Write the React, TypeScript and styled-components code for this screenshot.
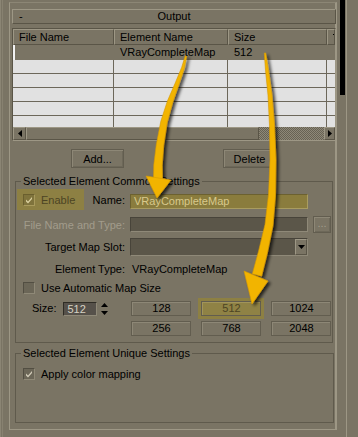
import React from 'react';
import styled, { createGlobalStyle } from 'styled-components';

const C = {
  bg: '#7a7464',
  light: '#9d9785',
  dark: '#5a5547',
  line: '#6c675a',
  row: '#e1e1e1',
  field: '#5b5649',
  hi: '#8d8043',
  hiText: '#d8c98c',
  hiInk: '#4c4423',
  arrow: '#f2b400',
};

const GlobalStyle = createGlobalStyle`
  html, body {
    margin: 0;
    background: ${C.bg};
    overflow: hidden;
  }
  body {
    font-family: 'Liberation Sans', Arial, sans-serif;
    font-size: 11px;
    color: #000;
  }
`;

const Screen = styled.div`
  position: relative;
  display: flex;
  width: 358px;
  height: 437px;
  background: ${C.bg};
`;

const LeftEdge = styled.div`
  width: 9px;
  flex: none;
  background: linear-gradient(to right, #8b8574 0 1px, ${C.bg} 1px 2px, #878170 2px 3px, ${C.bg} 3px);
`;

const Panel = styled.div`
  width: 328px;
  height: 428px;
  margin-top: 2px;
  flex: none;
  box-sizing: border-box;
  border-top: 1px solid #8c8675;
  border-left: 1px solid ${C.light};
  border-right: 2px solid ${C.light};
  border-bottom: 1px solid ${C.light};
  padding: 6px 0 0 2px;
  display: flex;
  flex-direction: column;
`;

const RightStrip = styled.div`
  flex: 1;
  display: flex;
  background: linear-gradient(to right, ${C.bg} 0 2px, transparent 2px);
`;

const ThumbTrack = styled.div`
  width: 5px;
  margin-left: 3px;
  height: 95px;
  background: #000;
`;

const TrackLine = styled.div`
  width: 1px;
  margin-left: 1px;
  background: ${C.light};
`;

const RolloutHeader = styled.div`
  position: relative;
  height: 15px;
  width: 324px;
  box-sizing: border-box;
  border-top: 1px solid ${C.light};
  border-left: 1px solid ${C.light};
  border-right: 1px solid ${C.dark};
  border-bottom: 1px solid ${C.dark};
  display: flex;
  align-items: center;
  justify-content: center;
  line-height: 13px;
`;

const Collapse = styled.span`
  position: absolute;
  left: 6px;
  top: 0;
`;

const Table = styled.div`
  margin-top: 4px;
  width: 324px;
  box-sizing: border-box;
  border-top: 1px solid ${C.dark};
  border-left: 1px solid ${C.dark};
  border-right: 1px solid ${C.light};
  border-bottom: 1px solid ${C.light};
  display: flex;
  flex-direction: column;
`;

const Cols = '101px 114px 99px 1fr';

const HeadRow = styled.div`
  display: grid;
  grid-template-columns: ${Cols};
  height: 16px;
`;

const HeadCell = styled.div`
  box-sizing: border-box;
  border-top: 1px solid ${C.light};
  border-left: 1px solid ${C.light};
  border-right: 1px solid ${C.dark};
  border-bottom: 1px solid ${C.dark};
  padding-left: 5px;
  line-height: 14px;
  white-space: nowrap;
  overflow: hidden;
  position: relative;
`;

const HeadMark = styled.span`
  position: absolute;
  left: 5px;
  top: 4px;
  width: 4px;
  height: 1px;
  background: #000;
`;

const Row = styled.div<{ $selected?: boolean }>`
  display: grid;
  grid-template-columns: ${Cols};
  height: ${p => (p.$selected ? '15px' : '14px')};
  box-sizing: border-box;
  background: ${p => (p.$selected ? C.bg : C.row)};
  border-bottom: ${p => (p.$selected ? 'none' : `1px solid ${C.line}`)};
  border-left: ${p => (p.$selected ? `2px solid #f2f2f2` : 'none')};
`;

const Cell = styled.div<{ $last?: boolean }>`
  box-sizing: border-box;
  padding-left: 5px;
  line-height: 14px;
  border-right: ${p => (p.$last ? 'none' : `1px solid ${C.line}`)};
  white-space: nowrap;
`;

const SelCell = styled.div`
  padding-left: 4px;
  line-height: 15px;
  white-space: nowrap;
`;

const RowsArea = styled.div`
  height: 67px;
  overflow: hidden;
`;

const ScrollBar = styled.div`
  display: flex;
  height: 13px;
`;

const Raised = styled.div<{ $w?: number }>`
  box-sizing: border-box;
  width: ${p => (p.$w ? `${p.$w}px` : 'auto')};
  flex: none;
  background: ${C.bg};
  border-top: 1px solid ${C.light};
  border-left: 1px solid ${C.light};
  border-right: 1px solid ${C.dark};
  border-bottom: 1px solid ${C.dark};
  display: flex;
  align-items: center;
  justify-content: center;
`;

const Checker = styled.div`
  flex: 1;
  background: repeating-conic-gradient(#8e8878 0 25%, #676253 0 50%) 0 0 / 2px 2px;
`;

const ButtonsRow = styled.div`
  display: flex;
  gap: 99px;
  padding-left: 59px;
  margin-top: 8px;
`;

const Button = styled.div<{ $w: number; $disabled?: boolean }>`
  box-sizing: border-box;
  width: ${p => p.$w}px;
  height: 19px;
  border: 1px solid #625d4f;
  box-shadow: inset 1px 1px 0 #8d8776, inset -1px -1px 0 #6d6859;
  display: flex;
  align-items: center;
  justify-content: center;
  color: ${p => (p.$disabled ? '#a39d8c' : '#000')};
`;

const Group = styled.fieldset<{ $h: number }>`
  margin: 0 0 0 3px;
  padding: 0;
  width: 318px;
  height: ${p => p.$h}px;
  box-sizing: border-box;
  border: 1px solid #5f5a4c;
  display: flex;
  flex-direction: column;
`;

const Legend = styled.legend`
  margin-left: 5px;
  padding: 0 2px;
  line-height: 13px;
  white-space: nowrap;
`;

const FormRow = styled.div<{ $h: number; $mt: number }>`
  display: grid;
  grid-template-columns: 109px 178px 18px;
  column-gap: 5px;
  align-items: center;
  height: ${p => p.$h}px;
  margin-top: ${p => p.$mt}px;
`;

const Label = styled.div<{ $disabled?: boolean }>`
  text-align: right;
  white-space: nowrap;
  color: ${p => (p.$disabled ? '#a29c8c' : '#000')};
`;

const NameCell = styled.div`
  display: flex;
  align-items: center;
  justify-content: space-between;
  height: 21px;
`;

const EnableBox = styled.div`
  display: flex;
  align-items: center;
  gap: 6px;
  height: 21px;
  width: 67px;
  box-sizing: border-box;
  margin-left: 1px;
  padding-left: 6px;
  background: ${C.hi};
  color: ${C.hiInk};
`;

const Field = styled.div<{ $hi?: boolean; $h?: number }>`
  box-sizing: border-box;
  height: ${p => p.$h ?? 15}px;
  background: ${p => (p.$hi ? '#8a7c3d' : C.field)};
  border-top: 1px solid ${p => (p.$hi ? '#6c6130' : '#48443a')};
  border-left: 1px solid ${p => (p.$hi ? '#6c6130' : '#48443a')};
  border-right: 1px solid ${p => (p.$hi ? '#a99c60' : '#8f8978')};
  border-bottom: 1px solid ${p => (p.$hi ? '#a99c60' : '#8f8978')};
  color: ${p => (p.$hi ? C.hiText : '#d3cebf')};
  padding-left: 3px;
  line-height: 13px;
  display: flex;
  align-items: center;
  position: relative;
`;

const NameField = styled(Field)`
  align-self: end;
  margin-bottom: 1px;
`;

const DropArrow = styled(Raised)`
  position: absolute;
  right: 0;
  top: 0;
  bottom: 0;
  width: 12px;
`;

const SmallButton = styled(Button)`
  height: 17px;
  margin-top: -1px;
  align-items: flex-end;
  padding-bottom: 3px;
`;

const Value = styled.div`
  padding-left: 2px;
  white-space: nowrap;
`;

const CheckRow = styled.div<{ $mt: number }>`
  display: flex;
  align-items: center;
  gap: 6px;
  margin: ${p => p.$mt}px 0 0 7px;
  height: 13px;
  white-space: nowrap;
`;

const Box = styled.div<{ $hi?: boolean }>`
  box-sizing: border-box;
  width: 12px;
  height: 12px;
  flex: none;
  background: ${p => (p.$hi ? '#7f733c' : '#6b6657')};
  border-top: 1px solid ${p => (p.$hi ? '#6a5f2e' : '#524e42')};
  border-left: 1px solid ${p => (p.$hi ? '#6a5f2e' : '#524e42')};
  border-right: 1px solid ${p => (p.$hi ? '#a89a5c' : '#8f8977')};
  border-bottom: 1px solid ${p => (p.$hi ? '#a89a5c' : '#8f8977')};
  display: flex;
  align-items: center;
  justify-content: center;
`;

const SizeRow = styled.div`
  display: flex;
  margin-top: 6px;
  height: 37px;
`;

const SizeLabel = styled.div`
  margin: 1px 0 0 16px;
  line-height: 14px;
  height: 14px;
  display: flex;
  align-items: center;
`;

const Spinner = styled.div`
  display: flex;
  margin: 2px 0 0 7px;
  gap: 3px;
  height: 14px;
`;

const SpinField = styled(Field)`
  width: 34px;
  height: 14px;
  background: #56514a;
  border-top-color: #2f2c25;
  border-left-color: #2f2c25;
  color: #d6d1c3;
`;

const SpinArrows = styled.div`
  display: flex;
  flex-direction: column;
  width: 9px;
  margin-top: -1px;
  gap: 1px;
`;

const SpinBtn = styled.div`
  height: 7px;
  display: flex;
  align-items: center;
  justify-content: center;
`;

const SizeGrid = styled.div`
  display: grid;
  grid-template-columns: repeat(3, 60px);
  grid-auto-rows: 15px;
  column-gap: 10px;
  row-gap: 5px;
  margin: 1px 0 0 22px;
`;

const SizeButton = styled.div<{ $hi?: boolean }>`
  box-sizing: border-box;
  border: 1px solid #625d4f;
  box-shadow: ${p =>
    p.$hi ? `0 0 0 3px ${C.hi}, inset 1px 1px 0 #a1945a` : 'inset 1px 1px 0 #8d8776'};
  background: ${p => (p.$hi ? '#8f8245' : C.bg)};
  color: ${p => (p.$hi ? C.hiInk : '#000')};
  display: flex;
  align-items: center;
  justify-content: center;
  line-height: 13px;
`;

const Overlay = styled.svg`
  position: absolute;
  left: 0;
  top: 0;
  pointer-events: none;
`;

type P = [number, number, number];

function taper(pts: P[]): string {
  const left: string[] = [];
  const right: string[] = [];
  pts.forEach(([x, y, w], i) => {
    const a = pts[Math.max(0, i - 1)];
    const b = pts[Math.min(pts.length - 1, i + 1)];
    const dx = b[0] - a[0];
    const dy = b[1] - a[1];
    const len = Math.hypot(dx, dy) || 1;
    const nx = -dy / len;
    const ny = dx / len;
    left.push(`${(x + (nx * w) / 2).toFixed(1)},${(y + (ny * w) / 2).toFixed(1)}`);
    right.unshift(`${(x - (nx * w) / 2).toFixed(1)},${(y - (ny * w) / 2).toFixed(1)}`);
  });
  return [...left, ...right].join(' ');
}

const arrow1: P[] = [
  [186, 56, 1.5], [183, 68, 3], [177, 84, 4], [170, 102, 5.5], [164, 122, 6.5],
  [160, 145, 7.5], [158, 165, 8.5], [158, 180, 9],
];
const arrow2: P[] = [
  [265, 53, 1.5], [267, 70, 3], [270, 95, 4], [272, 125, 5], [273, 160, 6],
  [272, 195, 7], [269, 225, 8], [263, 252, 9], [257, 275, 9.5],
];

const Tri = ({ dir }: { dir: 'left' | 'right' | 'up' | 'down' }) => {
  const pts = {
    left: '4,0 0,3.5 4,7',
    right: '0,0 4,3.5 0,7',
    up: '0,4 3.5,0 7,4',
    down: '0,0 7,0 3.5,4',
  }[dir];
  const vertical = dir === 'up' || dir === 'down';
  return (
    <svg width={vertical ? 7 : 4} height={vertical ? 4 : 7} viewBox={vertical ? '0 0 7 4' : '0 0 4 7'}>
      <polygon points={pts} fill="#000" />
    </svg>
  );
};

const Check = ({ color }: { color: string }) => (
  <svg width="8" height="8" viewBox="0 0 8 8">
    <path d="M1 3.5 L3 5.5 L7 1 L7 3 L3 7.5 L1 5.5 Z" fill={color} />
  </svg>
);

export default function App() {
  return (
    <Screen>
      <GlobalStyle />
      <LeftEdge />
      <Panel>
        <RolloutHeader>
          <Collapse>-</Collapse>
          Output
        </RolloutHeader>

        <Table>
          <HeadRow>
            <HeadCell>File Name</HeadCell>
            <HeadCell>Element Name</HeadCell>
            <HeadCell>Size</HeadCell>
            <HeadCell><HeadMark /></HeadCell>
          </HeadRow>
          <Row $selected>
            <SelCell />
            <SelCell>VRayCompleteMap</SelCell>
            <SelCell>512</SelCell>
            <SelCell />
          </Row>
          <RowsArea>
            {[0, 1, 2, 3, 4].map(i => (
              <Row key={i}>
                <Cell />
                <Cell />
                <Cell />
                <Cell $last />
              </Row>
            ))}
          </RowsArea>
          <ScrollBar>
            <Raised $w={13}><Tri dir="left" /></Raised>
            <Raised $w={233} />
            <Checker />
            <Raised $w={11}><Tri dir="right" /></Raised>
          </ScrollBar>
        </Table>

        <ButtonsRow>
          <Button $w={53}>Add...</Button>
          <Button $w={53}>Delete</Button>
        </ButtonsRow>

        <Group $h={168} style={{ marginTop: 7 }}>
          <Legend>Selected Element Common Settings</Legend>
          <FormRow $h={21} $mt={1}>
            <NameCell>
              <EnableBox>
                <Box $hi><Check color="#d9cf9e" /></Box>
                Enable
              </EnableBox>
              <span>Name:</span>
            </NameCell>
            <NameField $hi>VRayCompleteMap</NameField>
          </FormRow>
          <FormRow $h={17} $mt={6}>
            <Label $disabled>File Name and Type:</Label>
            <Field />
            <SmallButton $w={18} $disabled>...</SmallButton>
          </FormRow>
          <FormRow $h={18} $mt={5}>
            <Label>Target Map Slot:</Label>
            <Field $h={18}>
              <DropArrow><Tri dir="down" /></DropArrow>
            </Field>
          </FormRow>
          <FormRow $h={14} $mt={6}>
            <Label>Element Type:</Label>
            <Value>VRayCompleteMap</Value>
          </FormRow>
          <CheckRow $mt={5}>
            <Box />
            Use Automatic Map Size
          </CheckRow>
          <SizeRow>
            <SizeLabel>Size:</SizeLabel>
            <Spinner>
              <SpinField>512</SpinField>
              <SpinArrows>
                <SpinBtn><Tri dir="up" /></SpinBtn>
                <SpinBtn><Tri dir="down" /></SpinBtn>
              </SpinArrows>
            </Spinner>
            <SizeGrid>
              {['128', '512', '1024', '256', '768', '2048'].map(s => (
                <SizeButton key={s} $hi={s === '512'}>{s}</SizeButton>
              ))}
            </SizeGrid>
          </SizeRow>
        </Group>

        <Group $h={76} style={{ marginTop: 4, width: 319 }}>
          <Legend>Selected Element Unique Settings</Legend>
          <CheckRow $mt={7}>
            <Box><Check color="#d2ccb9" /></Box>
            Apply color mapping
          </CheckRow>
        </Group>
      </Panel>
      <RightStrip>
        <ThumbTrack />
        <TrackLine />
      </RightStrip>

      <Overlay width="358" height="437" viewBox="0 0 358 437">
        <defs>
          <filter id="sh" x="-50%" y="-20%" width="200%" height="140%">
            <feDropShadow dx="2.5" dy="2" stdDeviation="1.8" floodColor="#000" floodOpacity="0.7" />
          </filter>
        </defs>
        <g filter="url(#sh)" fill={C.arrow} stroke="#d89a00" strokeWidth="0.6">
          <polygon points={taper(arrow1)} />
          <polygon points="146,176 171,180 157,198" />
          <polygon points={taper(arrow2)} />
          <polygon points="244,271 268,281 252,304" />
        </g>
      </Overlay>
    </Screen>
  );
}
